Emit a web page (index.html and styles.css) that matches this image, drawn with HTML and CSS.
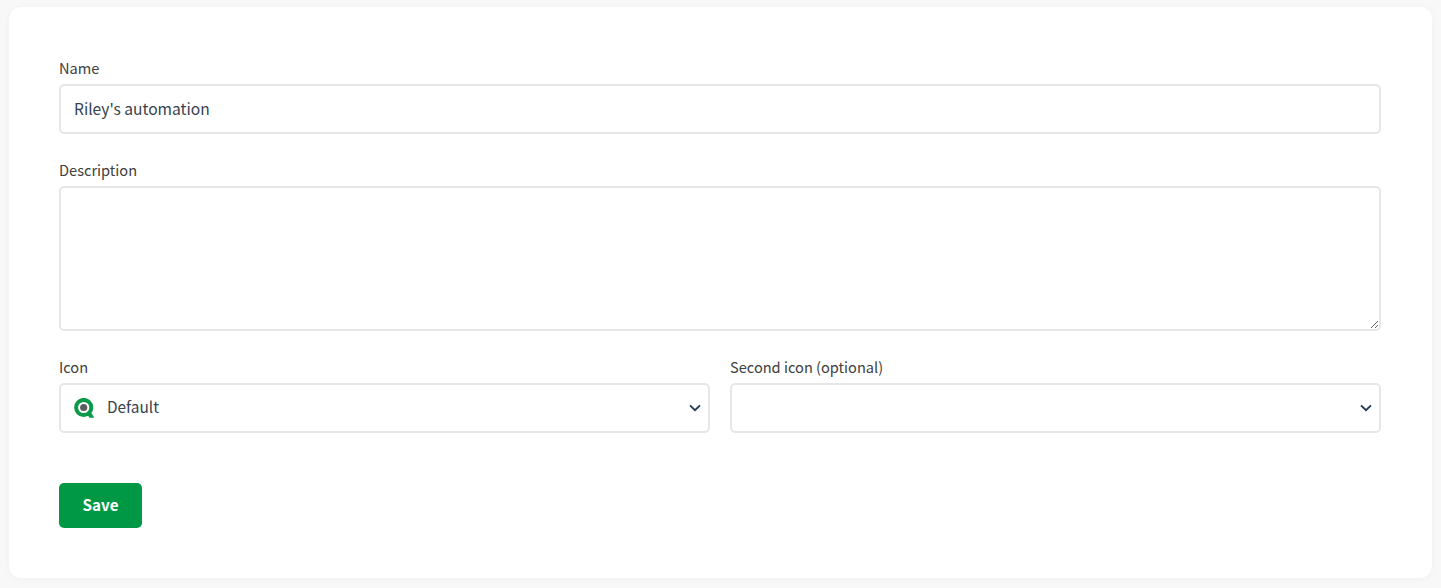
FILE: index.html
```html
<!DOCTYPE html>
<html lang="en">
<head>
<meta charset="utf-8">
<title>Automation settings</title>
<link rel="stylesheet" href="styles.css">
</head>
<body>
<main class="card">
  <form class="form">
    <div class="field">
      <label class="label" for="name">Name</label>
      <input class="control input" id="name" type="text" value="Riley's automation">
    </div>
    <div class="field">
      <label class="label" for="desc">Description</label>
      <textarea class="control textarea" id="desc"></textarea>
    </div>
    <div class="row">
      <div class="field">
        <span class="label">Icon</span>
        <div class="control select">
          <svg class="logo" viewBox="0 0 20 20" aria-hidden="true">
            <circle cx="9.7" cy="9.5" r="7.6" fill="none" stroke="#0a9a48" stroke-width="4"/>
            <circle cx="9.7" cy="9.5" r="3.6" fill="#5a5c61"/>
            <path d="M12.5 15.5 L15.5 19.8 L20.4 19.8 L16.8 14 Z" fill="#0a9a48"/>
          </svg>
          <span class="select-value">Default</span>
          <svg class="chevron" viewBox="0 0 12 8" aria-hidden="true"><path d="M1 1.3 L6 6.2 L11 1.3" fill="none" stroke="#1f3a52" stroke-width="1.8"/></svg>
        </div>
      </div>
      <div class="field">
        <span class="label">Second icon (optional)</span>
        <div class="control select">
          <span class="select-value"></span>
          <svg class="chevron" viewBox="0 0 12 8" aria-hidden="true"><path d="M1 1.3 L6 6.2 L11 1.3" fill="none" stroke="#1f3a52" stroke-width="1.8"/></svg>
        </div>
      </div>
    </div>
    <button class="save" type="button">Save</button>
  </form>
</main>
</body>
</html>
```

FILE: styles.css
```css
* { box-sizing: border-box; }
html, body { height: 100%; }
body {
  margin: 0;
  padding: 7px 9px 10px;
  background: #f8f8f8;
  font-family: "Noto Sans CJK JP", "Noto Sans", sans-serif;
  font-size: 16px;
  color: #404040;
}
.card {
  height: 571px;
  background: #fff;
  border-radius: 12px;
  padding: 50px 51px 50px 50px;
  box-shadow: 0 1px 8px rgba(0, 0, 0, 0.035);
}
.form { display: flex; flex-direction: column; }
.field { display: flex; flex-direction: column; margin-bottom: 25px; flex: 1 1 0; min-width: 0; }
.label { display: block; height: 27px; line-height: 22px; font-size: 14.6px; color: #404040; }
.control {
  display: block;
  width: 100%;
  border: 2px solid #e6e6e6;
  border-radius: 5px;
  background: #fff;
  font: inherit;
  color: #404040;
  outline: none;
}
.input { height: 50px; padding: 0 13px 2px; font-size: 15.6px; color: #36424e; }
.textarea { height: 145px; padding: 8px 13px; resize: vertical; margin: 0; }
.row { display: flex; gap: 20px; }
.row .field { margin-bottom: 50px; }
.select { height: 50px; display: flex; align-items: center; padding: 0 13px; }
.logo { width: 20px; height: 20px; flex: none; margin-right: 13px; }
.select-value { flex: 1; font-size: 15.4px; line-height: 24px; margin-bottom: 4px; color: #36424e; }
.chevron { width: 12px; height: 8px; flex: none; margin-right: -6px; }
.save {
  width: 83px;
  height: 45px;
  border: 0;
  border-radius: 5px;
  background: #009845;
  color: #fff;
  font: 700 15.2px "Noto Sans CJK JP", "Noto Sans", sans-serif;
  padding: 0 0 4px;
}
```
